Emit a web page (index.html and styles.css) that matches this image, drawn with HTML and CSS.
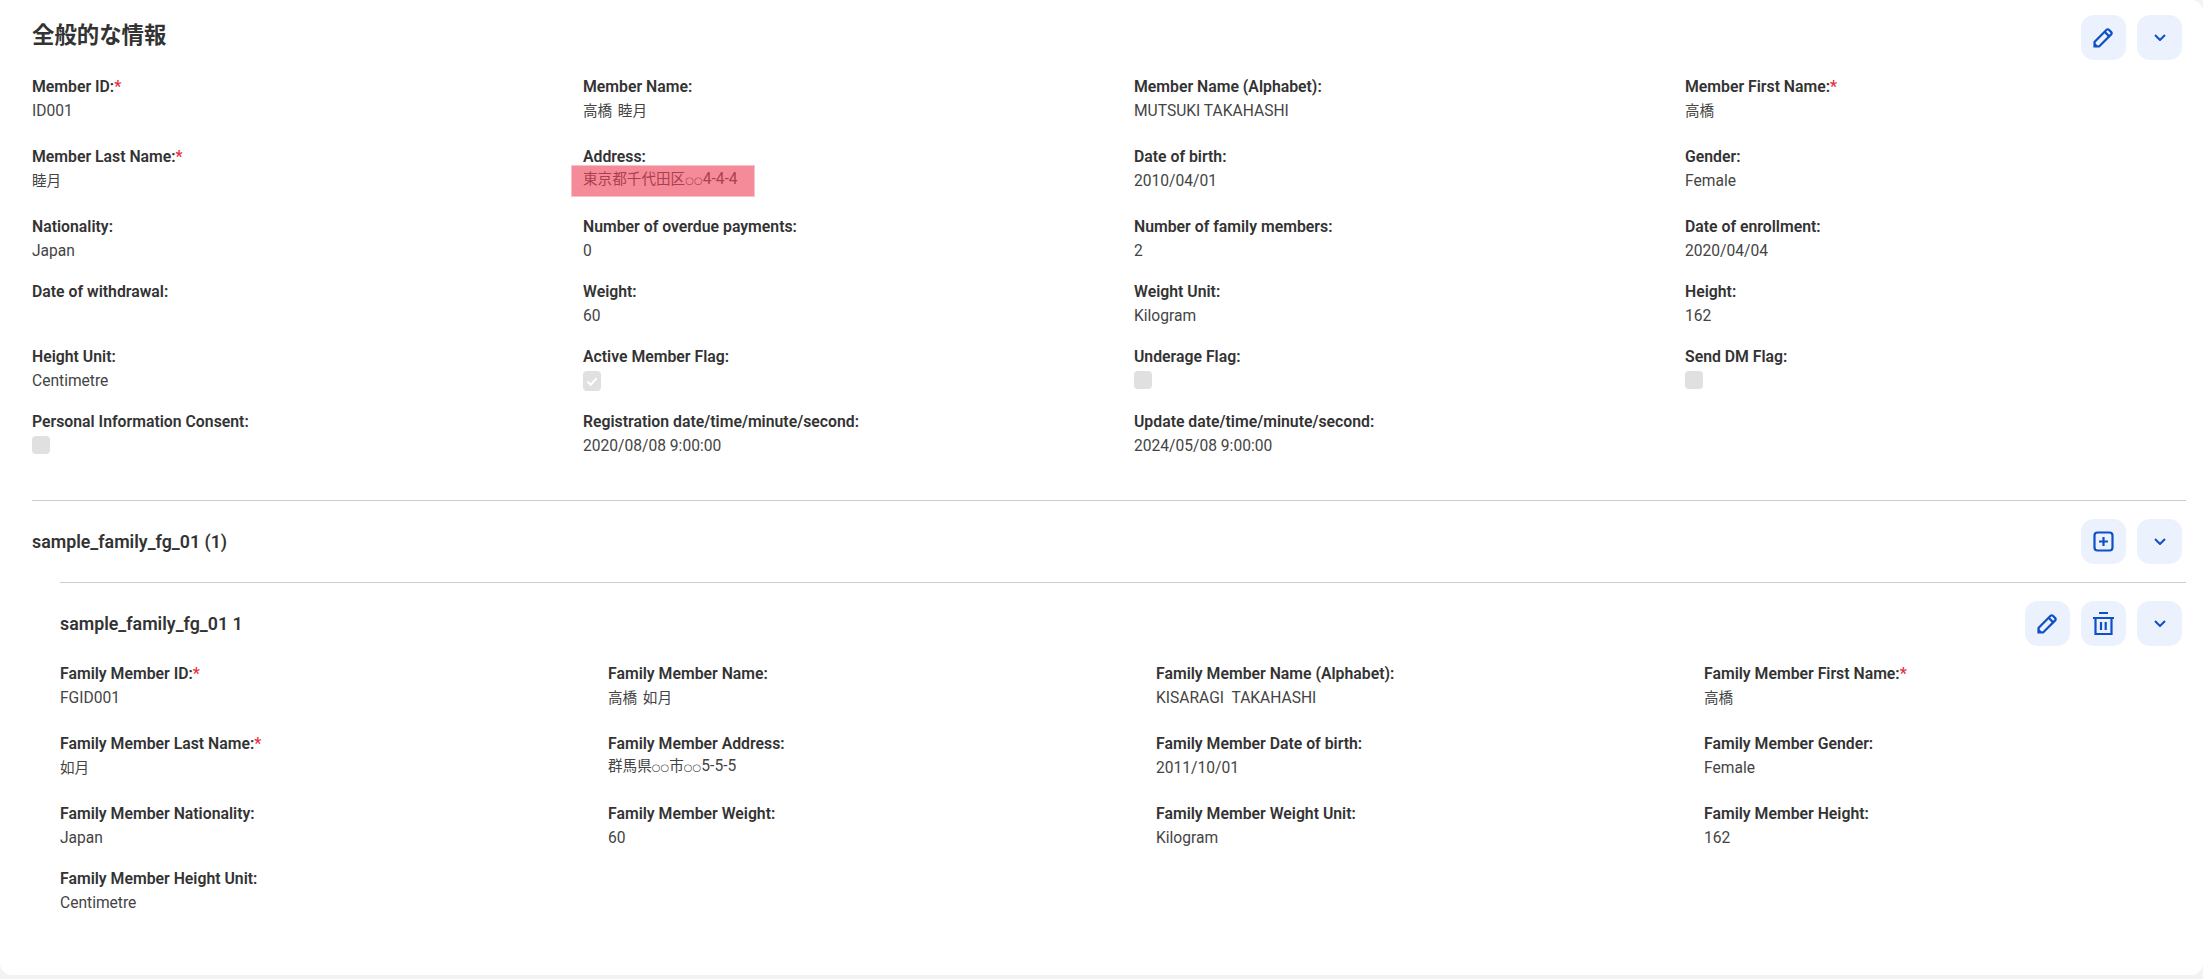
FILE: index.html
```html
<!DOCTYPE html>
<html lang="ja">
<head>
    <meta charset="UTF-8">
    <meta name="viewport" content="width=device-width, initial-scale=1.0">
    <title>全般的な情報</title>
    <link rel="stylesheet" href="styles.css">
</head>
<body>
    <div class="card">
        <div class="section-header">
            <h2 class="title">全般的な情報</h2>
            <div class="actions">
                <button class="icon-button"><svg class="icon" viewBox="0 0 21 21"><path d="M1.5 19.5v-4.6L13.6 2.8a1.6 1.6 0 0 1 2.3 0l2.3 2.3a1.6 1.6 0 0 1 0 2.3L6.1 19.5z"/><path d="M11.6 4.8l4.6 4.6"/><path class="tip" d="M1 20v-5l5 5z"/></svg></button>
                <button class="icon-button"><svg class="chevron" viewBox="0 0 12 7"><path d="M1 1l5 5 5-5"/></svg></button>
            </div>
        </div>

        <div class="fields">
            <div class="field"><span class="label">Member ID:<span class="req">*</span></span><span class="value">ID001</span></div>
            <div class="field"><span class="label">Member Name:</span><span class="value tall"><span class="cjk">高橋 睦月</span></span></div>
            <div class="field"><span class="label">Member Name (Alphabet):</span><span class="value">MUTSUKI TAKAHASHI</span></div>
            <div class="field"><span class="label">Member First Name:<span class="req">*</span></span><span class="value tall"><span class="cjk">高橋</span></span></div>

            <div class="field"><span class="label">Member Last Name:<span class="req">*</span></span><span class="value tall"><span class="cjk">睦月</span></span></div>
            <div class="field"><span class="label">Address:</span><span class="value address"><span class="cjk">東京都千代田区</span><span class="circles">○○</span>4-4-4</span><div class="highlight"></div></div>
            <div class="field"><span class="label">Date of birth:</span><span class="value">2010/04/01</span></div>
            <div class="field"><span class="label">Gender:</span><span class="value">Female</span></div>

            <div class="field"><span class="label">Nationality:</span><span class="value">Japan</span></div>
            <div class="field"><span class="label">Number of overdue payments:</span><span class="value">0</span></div>
            <div class="field"><span class="label">Number of family members:</span><span class="value">2</span></div>
            <div class="field"><span class="label">Date of enrollment:</span><span class="value">2020/04/04</span></div>

            <div class="field"><span class="label">Date of withdrawal:</span><span class="value"></span></div>
            <div class="field"><span class="label">Weight:</span><span class="value">60</span></div>
            <div class="field"><span class="label">Weight Unit:</span><span class="value">Kilogram</span></div>
            <div class="field"><span class="label">Height:</span><span class="value">162</span></div>

            <div class="field"><span class="label">Height Unit:</span><span class="value">Centimetre</span></div>
            <div class="field"><span class="label">Active Member Flag:</span><span class="checkbox checked"><svg viewBox="0 0 18 20"><path d="M4.5 10.5l3.2 3.2 6-6.6"/></svg></span></div>
            <div class="field"><span class="label">Underage Flag:</span><span class="checkbox"></span></div>
            <div class="field"><span class="label">Send DM Flag:</span><span class="checkbox"></span></div>

            <div class="field"><span class="label">Personal Information Consent:</span><span class="checkbox"></span></div>
            <div class="field"><span class="label">Registration date/time/minute/second:</span><span class="value">2020/08/08 9:00:00</span></div>
            <div class="field"><span class="label">Update date/time/minute/second:</span><span class="value">2024/05/08 9:00:00</span></div>
        </div>

        <div class="group">
            <div class="section-header">
                <h3 class="subtitle">sample_family_fg_01 (1)</h3>
                <div class="actions">
                    <button class="icon-button"><svg class="icon" viewBox="0 0 21 21"><rect x="1.5" y="1.5" width="18" height="18" rx="3"/><path d="M10.5 6v9M6 10.5h9"/></svg></button>
                    <button class="icon-button"><svg class="chevron" viewBox="0 0 12 7"><path d="M1 1l5 5 5-5"/></svg></button>
                </div>
            </div>

            <div class="child">
                <div class="section-header">
                    <h3 class="subtitle">sample_family_fg_01 1</h3>
                    <div class="actions">
                        <button class="icon-button"><svg class="icon" viewBox="0 0 21 21"><path d="M1.5 19.5v-4.6L13.6 2.8a1.6 1.6 0 0 1 2.3 0l2.3 2.3a1.6 1.6 0 0 1 0 2.3L6.1 19.5z"/><path d="M11.6 4.8l4.6 4.6"/><path class="tip" d="M1 20v-5l5 5z"/></svg></button>
                        <button class="icon-button"><svg class="icon trash" viewBox="0 0 21 23"><path d="M6 1h9M0 6h21M2.5 6v16h16V6M8 10v8M12.7 10v8"/></svg></button>
                        <button class="icon-button"><svg class="chevron" viewBox="0 0 12 7"><path d="M1 1l5 5 5-5"/></svg></button>
                    </div>
                </div>

                <div class="fields">
                    <div class="field"><span class="label">Family Member ID:<span class="req">*</span></span><span class="value">FGID001</span></div>
                    <div class="field"><span class="label">Family Member Name:</span><span class="value tall"><span class="cjk">高橋 如月</span></span></div>
                    <div class="field"><span class="label">Family Member Name (Alphabet):</span><span class="value">KISARAGI&nbsp; TAKAHASHI</span></div>
                    <div class="field"><span class="label">Family Member First Name:<span class="req">*</span></span><span class="value tall"><span class="cjk">高橋</span></span></div>

                    <div class="field"><span class="label">Family Member Last Name:<span class="req">*</span></span><span class="value tall"><span class="cjk">如月</span></span></div>
                    <div class="field"><span class="label">Family Member Address:</span><span class="value address"><span class="cjk">群馬県</span><span class="circles">○○</span><span class="cjk">市</span><span class="circles">○○</span>5-5-5</span></div>
                    <div class="field"><span class="label">Family Member Date of birth:</span><span class="value">2011/10/01</span></div>
                    <div class="field"><span class="label">Family Member Gender:</span><span class="value">Female</span></div>

                    <div class="field"><span class="label">Family Member Nationality:</span><span class="value">Japan</span></div>
                    <div class="field"><span class="label">Family Member Weight:</span><span class="value">60</span></div>
                    <div class="field"><span class="label">Family Member Weight Unit:</span><span class="value">Kilogram</span></div>
                    <div class="field"><span class="label">Family Member Height:</span><span class="value">162</span></div>

                    <div class="field"><span class="label">Family Member Height Unit:</span><span class="value">Centimetre</span></div>
                </div>
            </div>
        </div>
    </div>
</body>
</html>
```

FILE: styles.css
```css
* {
    box-sizing: border-box;
}

body {
    margin: 0;
    background-color: #f3f3f3;
    font-family: Roboto, "Noto Sans CJK JP", sans-serif;
    font-size: 15.6px;
    color: #333333;
}

.card {
    height: 975px;
    padding: 15px 17px 0 32px;
    background-color: #ffffff;
    border-radius: 0 12px 12px 12px;
    overflow: hidden;
}

.section-header {
    display: flex;
    justify-content: space-between;
    align-items: center;
    padding-right: 4px;
}

.title {
    margin: 0 0 10px;
    font-size: 22.4px;
    font-weight: 700;
    color: #333333;
}

.subtitle {
    margin: 0;
    font-size: 17.8px;
    font-weight: 600;
    color: #333333;
}

.actions {
    display: flex;
    gap: 11px;
}

.icon-button {
    display: flex;
    align-items: center;
    justify-content: center;
    width: 45px;
    height: 45px;
    padding: 0;
    border: none;
    border-radius: 13px;
    background-color: #ebf1fd;
}

.icon {
    width: 21px;
    height: 21px;
    fill: none;
    stroke: #0d50c8;
    stroke-width: 2.2;
}

.icon .tip {
    fill: #0d50c8;
    stroke: none;
}

.icon.trash {
    height: 23px;
}

.chevron {
    width: 12px;
    height: 7px;
    fill: none;
    stroke: #0d50c8;
    stroke-width: 2;
}

.fields {
    display: grid;
    grid-template-columns: 551px 551px 551px 1fr;
    row-gap: 23px;
    margin-top: 18px;
}

.child .fields {
    grid-template-columns: 548px 548px 548px 1fr;
    margin-top: 19px;
}

.field {
    position: relative;
}

.label {
    display: block;
    margin-bottom: 6px;
    font-size: 15.8px;
    line-height: 18px;
    font-weight: 600;
}

.req {
    color: #e8303f;
}

.value {
    display: block;
    min-height: 18px;
    line-height: 18px;
    color: #444444;
}

.value.tall {
    min-height: 23px;
}

.value.address {
    margin-top: -2px;
}

.cjk {
    font-size: 14.6px;
    line-height: 19px;
    word-spacing: 2px;
}

.value.address .cjk {
    line-height: 1;
}

.circles {
    font-family: "DejaVu Sans", sans-serif;
    font-size: 10px;
    line-height: 1;
}

.checkbox {
    display: block;
    width: 18px;
    height: 18px;
    margin-top: -1px;
    margin-bottom: 1px;
    background-color: #e0e0e0;
    border-radius: 4px;
}

.checkbox.checked {
    height: 20px;
    margin-bottom: -1px;
}

.checkbox svg {
    display: block;
    fill: none;
    stroke: #ffffff;
    stroke-width: 2;
}

/* annotation box on top of the address value */
.highlight {
    position: absolute;
    left: -12px;
    top: 17px;
    width: 184px;
    height: 32px;
    background-color: rgba(238, 60, 85, 0.6);
    border: 1px solid #f7c3cb;
}

.group {
    margin-top: 45px;
    padding-top: 18px;
    border-top: 1px solid #cccccc;
}

.child {
    margin-top: 18px;
    margin-left: 28px;
    padding-top: 18px;
    border-top: 1px solid #cccccc;
}
```
